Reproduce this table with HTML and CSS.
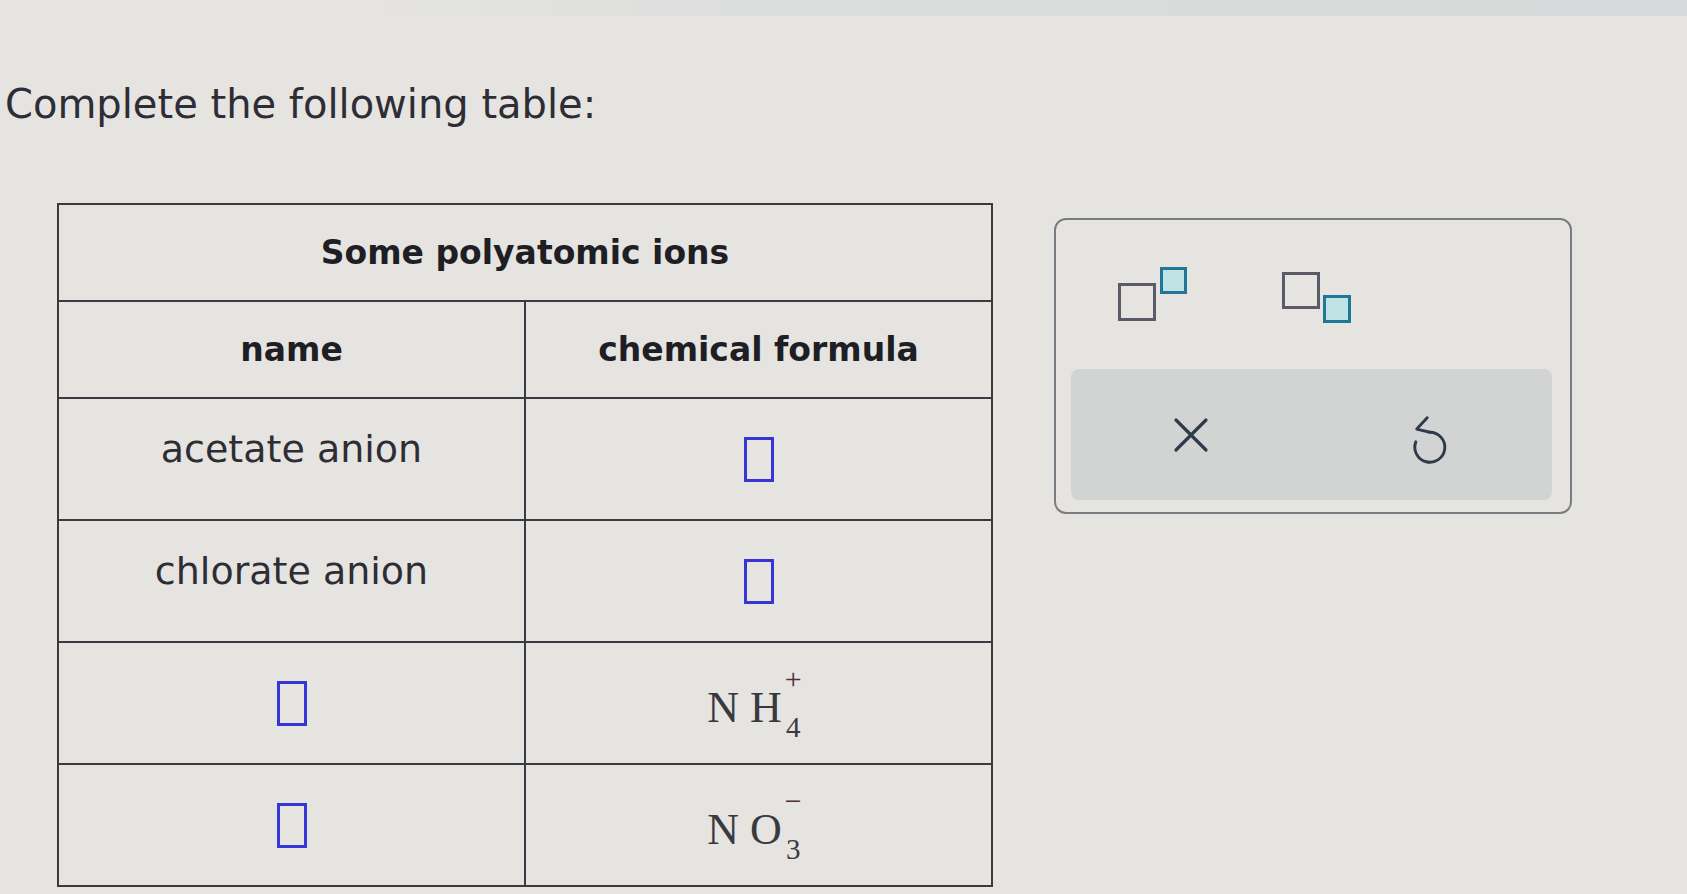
FILE: index.html
```html
<!DOCTYPE html>
<html lang="en">
<head>
    <meta charset="UTF-8">
    <meta name="viewport" content="width=device-width, initial-scale=1.0">
    <title>Polyatomic ions</title>
    <link rel="stylesheet" href="styles.css">
</head>
<body>
    <div class="topband"></div>
    <main class="page">
        <p class="prompt">Complete the following table:</p>

        <div class="work">
            <table class="ions">
                <tr class="row-caption">
                    <th colspan="2">Some polyatomic ions</th>
                </tr>
                <tr class="row-head">
                    <th>name</th>
                    <th>chemical formula</th>
                </tr>
                <tr class="row-data">
                    <td class="name">acetate anion</td>
                    <td><span class="blank"></span></td>
                </tr>
                <tr class="row-data">
                    <td class="name">chlorate anion</td>
                    <td><span class="blank"></span></td>
                </tr>
                <tr class="row-data">
                    <td><span class="blank"></span></td>
                    <td>
                        <span class="formula">N<span class="gap"></span>H<span class="scripts"><span class="charge">+</span><span class="count">4</span></span></span>
                    </td>
                </tr>
                <tr class="row-data">
                    <td><span class="blank"></span></td>
                    <td>
                        <span class="formula">N<span class="gap"></span>O<span class="scripts"><span class="charge">−</span><span class="count">3</span></span></span>
                    </td>
                </tr>
            </table>

            <div class="palette">
                <div class="palette-tools">
                    <button class="tool" title="superscript">
                        <svg width="70" height="56" viewBox="0 0 70 56">
                            <rect class="box-main" x="1.5" y="17.5" width="35" height="35"/>
                            <rect class="box-slot" x="43.5" y="1.5" width="24" height="24"/>
                        </svg>
                    </button>
                    <button class="tool tool-sub" title="subscript">
                        <svg width="70" height="52" viewBox="0 0 70 52">
                            <rect class="box-main" x="1.5" y="1.5" width="35" height="34"/>
                            <rect class="box-slot" x="42.5" y="24.5" width="25" height="25"/>
                        </svg>
                    </button>
                </div>
                <div class="palette-actions">
                    <button class="action" title="clear">
                        <svg width="38" height="38" viewBox="0 0 38 38">
                            <path d="M4 4 L34 34 M34 4 L4 34"/>
                        </svg>
                    </button>
                    <button class="action" title="undo">
                        <svg class="undo" width="40" height="51" viewBox="0 0 44 56">
                            <path d="M20 4 L8.5 16.5 L23 20"/>
                            <path d="M23 20 A16.5 16.5 0 1 1 7.5 30.6"/>
                        </svg>
                    </button>
                </div>
            </div>
        </div>
    </main>
</body>
</html>
```

FILE: styles.css
```css
body {
    margin: 0;
    padding: 0;
    background: #e5e4e1;
    color: #2e2d35;
    font-family: "DejaVu Sans", Verdana, sans-serif;
}
.topband {
    height: 16px;
    background: linear-gradient(to right, #e5e4e1 22%, #dcdedd 45%, #d6d9d9 100%);
}
.page {
    padding-left: 5px;
    height: 878px;
    overflow: hidden;
}
.prompt {
    margin: 0;
    padding-top: 64px;
    font-size: 40px;
    line-height: 48px;
}
.work {
    display: flex;
    align-items: flex-start;
    margin-top: 75px;
}
.ions {
    margin-left: 52px;
    width: 936px;
    border-collapse: collapse;
    table-layout: fixed;
}
.ions th,
.ions td {
    border: 2px solid #3b3a42;
    text-align: center;
    vertical-align: middle;
    padding: 0;
}
.ions th {
    font-weight: bold;
    font-size: 33px;
    color: #1f1e24;
}
.row-caption,
.row-head {
    height: 97px;
}
.row-data {
    height: 122px;
}
.row-data .name {
    font-size: 38px;
    padding-bottom: 20px;
}
.blank {
    display: inline-block;
    width: 30px;
    height: 45px;
    border: 3px solid #3636d6;
    box-sizing: border-box;
    vertical-align: middle;
}
.formula {
    display: inline-flex;
    align-items: center;
    font-family: "Liberation Serif", "Times New Roman", serif;
    font-size: 44px;
    line-height: 50px;
    color: #3a3940;
    margin-right: 8px;
    margin-top: 10px;
}
.gap {
    display: inline-block;
    width: 11px;
}
.scripts {
    display: inline-flex;
    flex-direction: column;
    align-items: center;
    margin-left: 3px;
    margin-bottom: 7px;
}
.charge {
    font-size: 30px;
    line-height: 20px;
    height: 20px;
    color: #4a3038;
}
.count {
    font-size: 29px;
    line-height: 28px;
    margin-top: 24px;
}
.palette {
    margin-left: 61px;
    margin-top: 15px;
    width: 518px;
    height: 296px;
    box-sizing: border-box;
    border: 2px solid #7a7b83;
    border-radius: 12px;
    padding: 0 18px 12px 15px;
}
.palette-tools {
    display: flex;
    align-items: center;
    height: 149px;
}
.tool {
    width: 164px;
    display: flex;
    justify-content: center;
    background: none;
    border: none;
    padding: 0;
    cursor: pointer;
}
.tool-sub {
    margin-top: 6px;
}
.box-main {
    fill: none;
    stroke: #5b5a66;
    stroke-width: 3;
}
.box-slot {
    fill: #bfe3e5;
    stroke: #1f7695;
    stroke-width: 3;
}
.palette-actions {
    display: grid;
    grid-template-columns: 1fr 1fr;
    place-items: center;
    height: 131px;
    background: #d2d4d4;
    border-radius: 8px;
}
.action {
    background: none;
    border: none;
    padding: 0;
    cursor: pointer;
    display: flex;
}
.action path {
    fill: none;
    stroke: #2f3a4b;
    stroke-width: 3.2;
    stroke-linecap: round;
    stroke-linejoin: round;
}
.undo {
    margin-top: 10px;
    margin-right: 6px;
}
```
